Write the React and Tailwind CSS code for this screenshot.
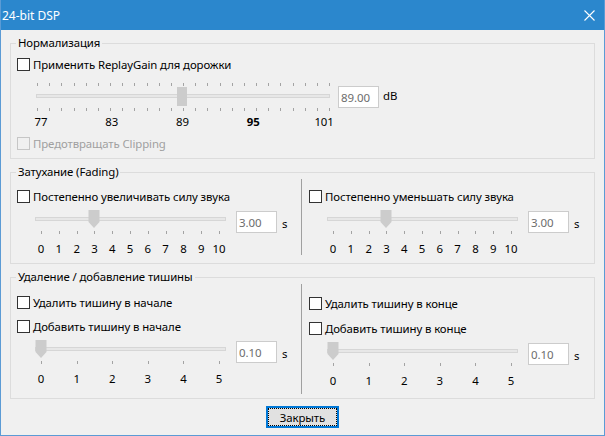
import React from "react";
import clsx from "clsx";

// tick helpers for the small trackbars
function Ticks({ xs, y, h = 3 }) {
  return xs.map((x, i) => <rect key={i} x={x} y={y} width="1" height={h} fill="#a3a3a3" />);
}

function Checkbox({ label, disabled }) {
  return (
    <div className="flex items-center h-[13px]">
      <span
        className={clsx(
          "w-[13px] h-[13px] border shrink-0",
          disabled ? "border-[#c6c6c6] bg-[#f0f0f0]" : "border-[#333333] bg-white"
        )}
      />
      <span className={clsx("ml-[3px] leading-[15px] whitespace-nowrap", disabled ? "text-[#a0a0a0]" : "text-black")}>
        {label}
      </span>
    </div>
  );
}

function ValueBox({ value }) {
  return (
    <input
      readOnly
      value={value}
      className="w-[41px] h-[22px] border border-[#cccccc] bg-white text-[#6d6d6d] px-[2px] text-[11.5px] outline-none font-['Noto_Sans',sans-serif]"
    />
  );
}

function NormSlider() {
  const xs = Array.from({ length: 25 }, (_, i) => Math.round(1 + i * 12.167));
  const labels = ["77", "83", "89", "95", "101"];
  return (
    <div className="w-[294px] flex flex-col">
      <svg width="294" height="29" className="block">
        <rect x="0.5" y="11.5" width="293" height="3" fill="#e7e7e7" stroke="#d6d6d6" />
        <Ticks xs={xs} y={0} />
        <Ticks xs={xs} y={25} />
        <rect x="141" y="4" width="10" height="19" fill="#cccccc" />
      </svg>
      <div className="mt-[2px] -ml-[5px] w-[303px] shrink-0 flex justify-between">
        {labels.map((l) => (
          <span key={l} className={clsx("w-[20px] flex justify-center leading-[15px]", l === "95" && "font-bold")}>
            {l}
          </span>
        ))}
      </div>
    </div>
  );
}

function Slider({ count, value }) {
  const step = 178 / count;
  const xs = Array.from({ length: count + 1 }, (_, i) => Math.round(6 + i * step));
  const cx = xs[value];
  return (
    <div className="flex flex-col">
      <svg width="191" height="25" className="block">
        <rect x="0.5" y="7.5" width="190" height="3" fill="#e7e7e7" stroke="#d6d6d6" />
        <path d={`M${cx - 5.5} 0 H${cx + 5.5} V12 L${cx} 18 L${cx - 5.5} 12 Z`} fill="#cccccc" />
        <Ticks xs={xs} y={21} />
      </svg>
      <div className="mt-[6px] w-[190px] flex justify-between">
        {xs.map((_, i) => (
          <span key={i} className="w-[12px] flex justify-center leading-[15px]">
            {i}
          </span>
        ))}
      </div>
    </div>
  );
}

function SliderRow({ count, value, text }) {
  return (
    <div className="flex items-start ml-[18px]">
      <Slider count={count} value={value} />
      <div className="ml-[10px] mt-[1px]">
        <ValueBox value={text} />
      </div>
      <span className="ml-[5px] mt-[6px] leading-[15px]">s</span>
    </div>
  );
}

function Group({ title, className, children }) {
  return (
    <fieldset className={clsx("border border-[#dcdcdc] rounded-none", className)}>
      <legend className="ml-[5px] px-[2px] leading-[14px]">{title}</legend>
      {children}
    </fieldset>
  );
}

export default function App() {
  return (
    <div className="w-[605px] h-[436px] flex flex-col bg-[#f0f0f0] border-x border-b border-[#5b9bd5] text-[11.4px] tracking-[-0.1px] text-black font-['Noto_Sans',sans-serif]">
      {/* title bar */}
      <div className="h-[30px] shrink-0 bg-[#2b87cd] flex items-center justify-between text-white">
        <span className="pl-[1px] leading-[15px] text-[12px] tracking-normal">24-bit DSP</span>
        <svg width="11" height="11" className="mr-[9px]" viewBox="0 0 11 11">
          <path d="M0.5 0.5 L10.5 10.5 M10.5 0.5 L0.5 10.5" stroke="#ffffff" strokeWidth="1.1" fill="none" />
        </svg>
      </div>

      <div className="flex flex-col px-[9px] pt-[6px] gap-[6px]">
        <Group title="Нормализация" className="h-[123px]">
          <div className="pl-[6px] pt-[8px]">
            <Checkbox label="Применить ReplayGain для дорожки" />
            <div className="mt-[12px] ml-[19px] flex items-start">
              <NormSlider />
              <div className="ml-[8px] mt-[3px]">
                <ValueBox value="89.00" />
              </div>
              <span className="ml-[4px] mt-[5px] leading-[15px]">dB</span>
            </div>
            <div className="mt-[8px]">
              <Checkbox label="Предотвращать Clipping" disabled />
            </div>
          </div>
        </Group>

        <Group title="Затухание (Fading)" className="h-[99px]">
          <div className="flex">
            <div className="w-[290px] pl-[6px] pt-[11px]">
              <Checkbox label="Постепенно увеличивать силу звука" />
              <div className="mt-[7px]">
                <SliderRow count={10} value={3} text="3.00" />
              </div>
            </div>
            <div className="w-px h-[76px] bg-[#a0a0a0]" />
            <div className="flex-1 pl-[7px] pt-[11px]">
              <Checkbox label="Постепенно уменьшать силу звука" />
              <div className="mt-[7px]">
                <SliderRow count={10} value={3} text="3.00" />
              </div>
            </div>
          </div>
        </Group>

        <Group title="Удаление / добавление тишины" className="h-[129px]">
          <div className="flex">
            <div className="w-[290px] pl-[6px] pt-[12px]">
              <Checkbox label="Удалить тишину в начале" />
              <div className="mt-[11px]">
                <Checkbox label="Добавить тишину в начале" />
              </div>
              <div className="mt-[7px]">
                <SliderRow count={5} value={0} text="0.10" />
              </div>
            </div>
            <div className="w-px h-[110px] bg-[#a0a0a0]" />
            <div className="flex-1 pl-[7px] pt-[13px]">
              <Checkbox label="Удалить тишину в конце" />
              <div className="mt-[12px]">
                <Checkbox label="Добавить тишину в конце" />
              </div>
              <div className="mt-[7px]">
                <SliderRow count={5} value={0} text="0.10" />
              </div>
            </div>
          </div>
        </Group>

        <button className="self-center mt-[1px] w-[73px] h-[22px] border-2 border-[#0078d7] bg-[#e1e1e1] p-0 flex">
          <span className="flex-1 border border-dotted border-black flex items-center justify-center leading-[15px]">
            Закрыть
          </span>
        </button>
      </div>
    </div>
  );
}
